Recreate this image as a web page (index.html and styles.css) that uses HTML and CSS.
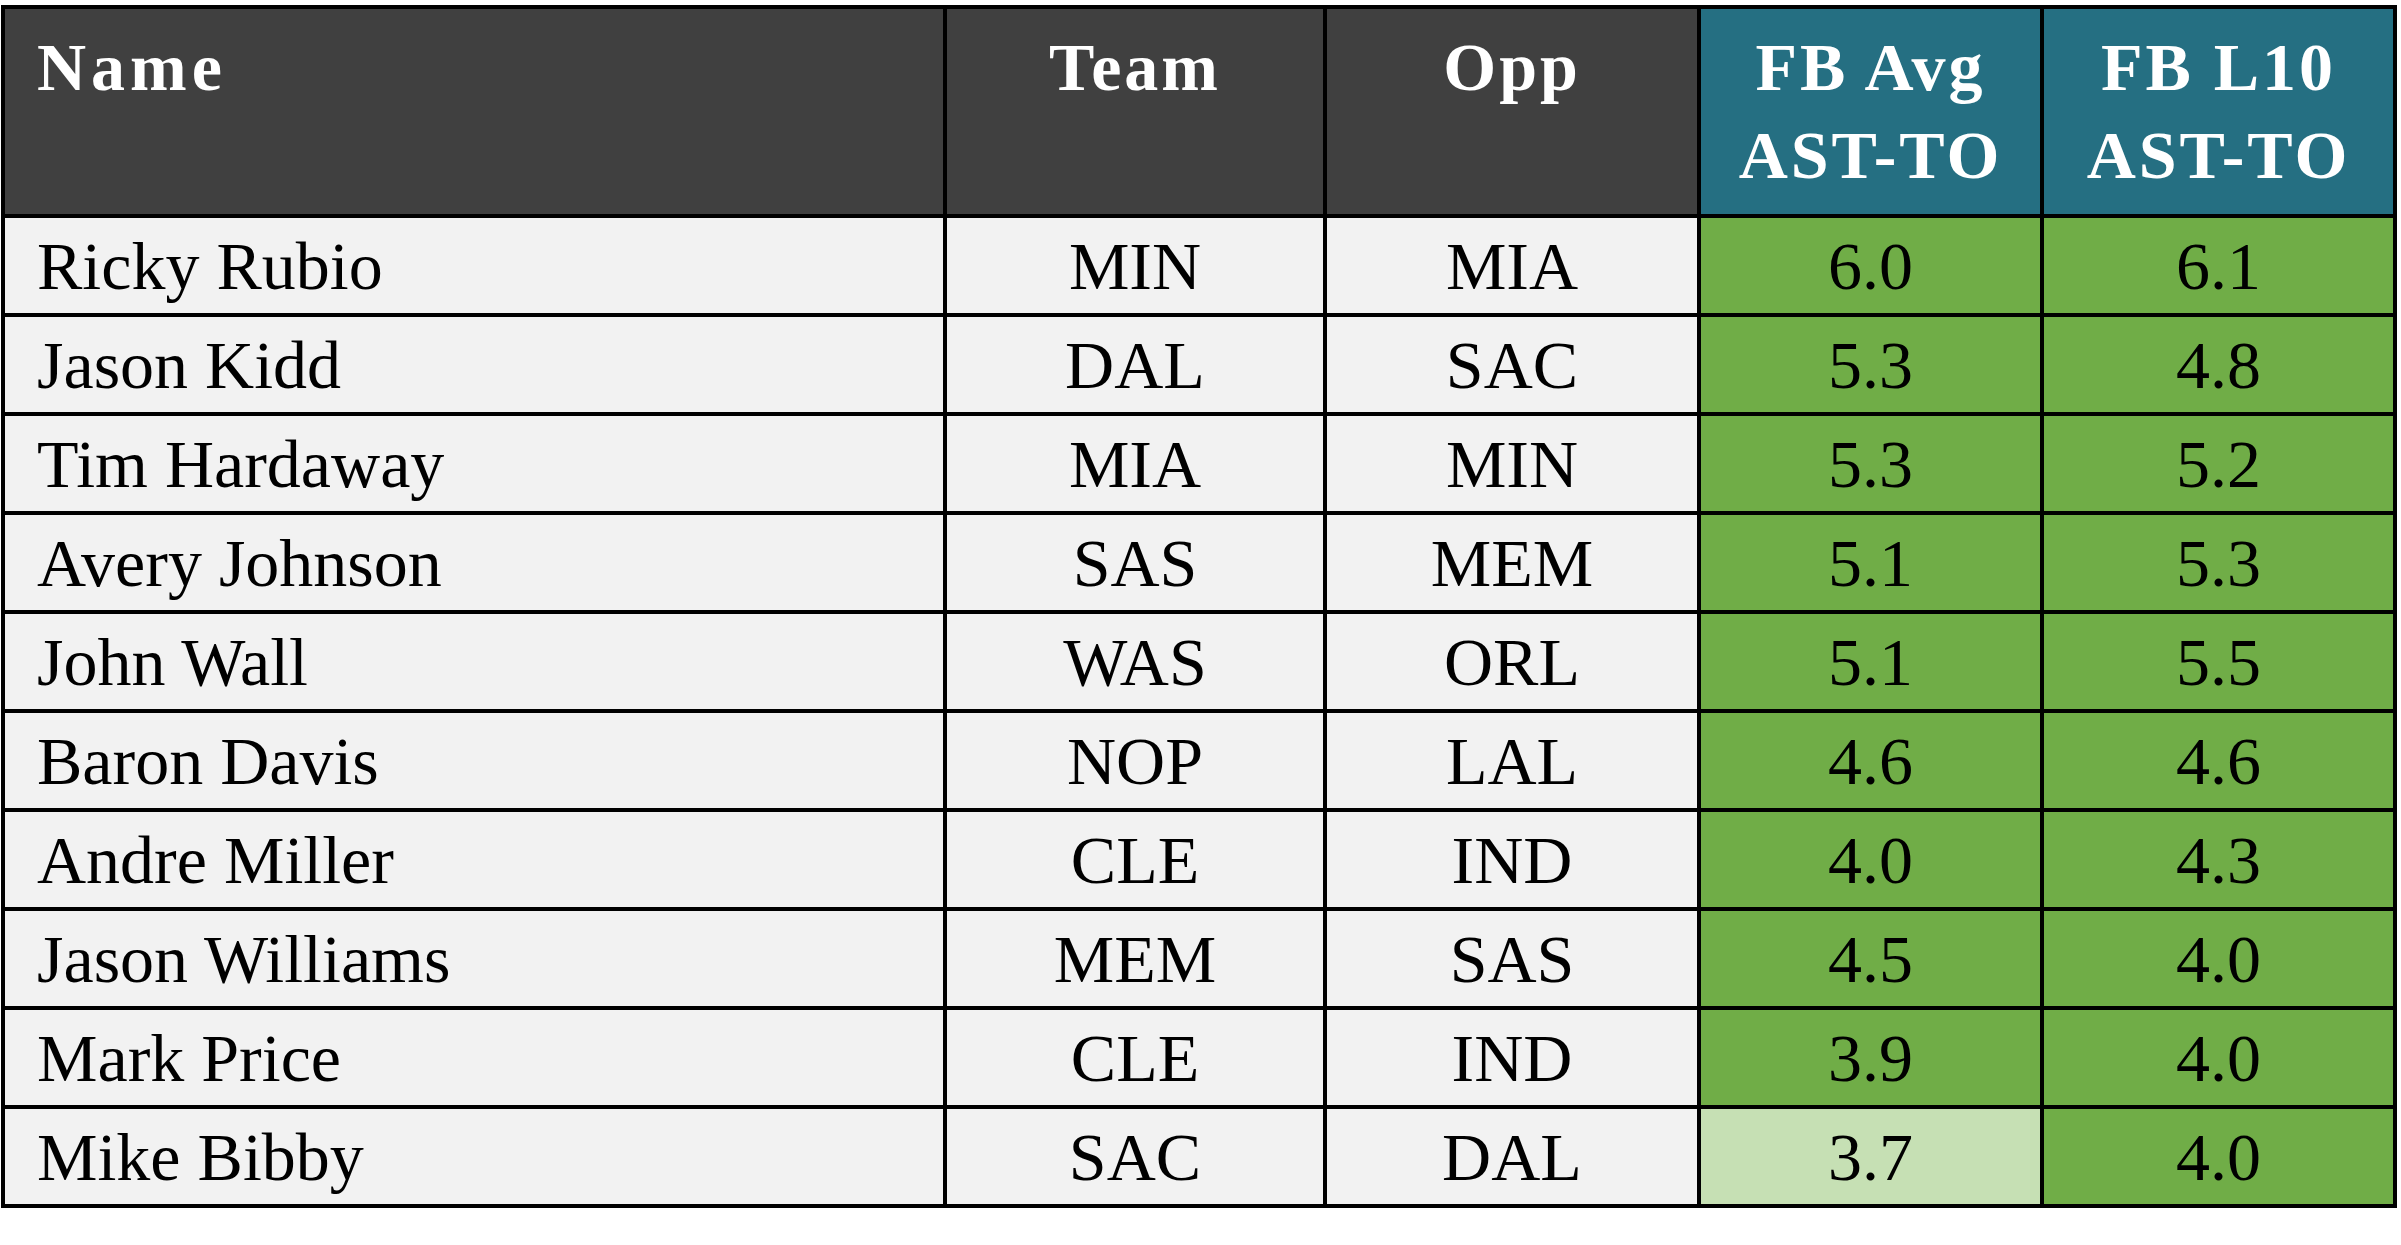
FILE: index.html
```html
<!DOCTYPE html>
<html>
<head>
<meta charset="utf-8">
<link rel="stylesheet" href="styles.css">
</head>
<body>
<div class="sheet">
  <div class="hd hd-dark left">Name</div>
  <div class="hd hd-dark">Team</div>
  <div class="hd hd-dark">Opp</div>
  <div class="hd hd-teal">FB Avg<br>AST-TO</div>
  <div class="hd hd-teal">FB L10<br>AST-TO</div>

  <div class="c left">Ricky Rubio</div><div class="c">MIN</div><div class="c">MIA</div><div class="c g">6.0</div><div class="c g">6.1</div>
  <div class="c left">Jason Kidd</div><div class="c">DAL</div><div class="c">SAC</div><div class="c g">5.3</div><div class="c g">4.8</div>
  <div class="c left">Tim Hardaway</div><div class="c">MIA</div><div class="c">MIN</div><div class="c g">5.3</div><div class="c g">5.2</div>
  <div class="c left">Avery Johnson</div><div class="c">SAS</div><div class="c">MEM</div><div class="c g">5.1</div><div class="c g">5.3</div>
  <div class="c left">John Wall</div><div class="c">WAS</div><div class="c">ORL</div><div class="c g">5.1</div><div class="c g">5.5</div>
  <div class="c left">Baron Davis</div><div class="c">NOP</div><div class="c">LAL</div><div class="c g">4.6</div><div class="c g">4.6</div>
  <div class="c left">Andre Miller</div><div class="c">CLE</div><div class="c">IND</div><div class="c g">4.0</div><div class="c g">4.3</div>
  <div class="c left">Jason Williams</div><div class="c">MEM</div><div class="c">SAS</div><div class="c g">4.5</div><div class="c g">4.0</div>
  <div class="c left">Mark Price</div><div class="c">CLE</div><div class="c">IND</div><div class="c g">3.9</div><div class="c g">4.0</div>
  <div class="c left">Mike Bibby</div><div class="c">SAC</div><div class="c">DAL</div><div class="c lg">3.7</div><div class="c g">4.0</div>
</div>
</body>
</html>
```
FILE: styles.css
```css
html, body {
  margin: 0;
  padding: 0;
  background: #ffffff;
}

.sheet {
  margin: 5px 0 0 1px;
  width: 2396px;
  box-sizing: border-box;
  display: grid;
  grid-template-columns: 938px 376px 370px 339px 349px;
  grid-template-rows: 205px repeat(10, 95px);
  gap: 4px;
  padding: 4px;
  background: #000000;
  font-family: "Liberation Serif", "Times New Roman", serif;
  font-size: 68px;
  line-height: 88px;
}

.hd {
  color: #ffffff;
  font-weight: bold;
  text-align: center;
  padding-top: 14px;
  letter-spacing: 3px;
  box-sizing: border-box;
}

.hd-dark {
  background: #404040;
}

.hd-teal {
  background: #256f82;
}

.c {
  background: #f2f2f2;
  color: #000000;
  display: flex;
  align-items: center;
  justify-content: center;
}

.hd.left {
  text-align: left;
  padding-left: 32px;
  letter-spacing: 5px;
}

.c.left {
  justify-content: flex-start;
  padding-left: 32px;
}

.c.g {
  background: #70ad47;
}

.c.lg {
  background: #c6e0b4;
}
```
